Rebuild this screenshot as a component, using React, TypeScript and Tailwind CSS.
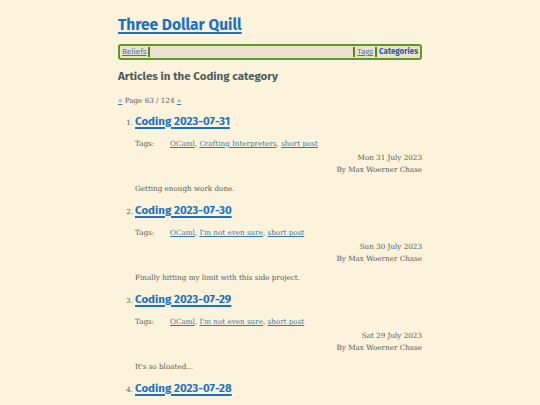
import React from "react";

const posts = [
  {
    n: 1,
    title: "Coding 2023-07-31",
    tags: ["OCaml", "Crafting Interpreters", "short post"],
    date: "Mon 31 July 2023",
    summary: "Getting enough work done.",
  },
  {
    n: 2,
    title: "Coding 2023-07-30",
    tags: ["OCaml", "I'm not even sure", "short post"],
    date: "Sun 30 July 2023",
    summary: "Finally hitting my limit with this side project.",
  },
  {
    n: 3,
    title: "Coding 2023-07-29",
    tags: ["OCaml", "I'm not even sure", "short post"],
    date: "Sat 29 July 2023",
    summary: "It's so bloated...",
  },
  {
    n: 4,
    title: "Coding 2023-07-28",
    tags: ["OCaml", "I'm not even sure", "short post"],
    date: "Fri 28 July 2023",
    summary: "More of the same.",
  },
];

const sans = "font-['Fira_Sans','Lato','Noto_Sans',sans-serif]";
const serif = "font-['DejaVu_Serif','Liberation_Serif',serif]";

export default function App() {
  return (
    <div className={`h-[405px] overflow-hidden bg-[#fbf3dc] ${serif} text-[#5a5a5a] text-[7.2px]`}>
      <div className="mx-auto w-[304px] pt-[14px]">
        {/* -- Site title -- */}
        <h1 className={`${sans} text-[15.5px] font-bold leading-[22px]`}>
          <a href="#" className="text-[#1b72c0] underline decoration-[1.5px] underline-offset-2">
            Three Dollar Quill
          </a>
        </h1>

        {/* -- Nav -- */}
        <nav
          className={`${sans} mt-[8px] flex h-[16px] items-center rounded-[3px] border-2 border-[#5d9a22] bg-[#ebe3cf] px-[2px] text-[8px]`}
        >
          <a href="#" className="text-[#3b78b0] underline">Beliefs</a>
          <span className="ml-[1px] h-[10px] w-[2px] bg-[#4f8a1a]" />
          <span className="flex-1" />
          <span className="mr-[2px] h-[10px] w-[2px] bg-[#4f8a1a]" />
          <a href="#" className="text-[#3b78b0] underline">Tags</a>
          <span className="mx-[2px] h-[10px] w-[2px] bg-[#4f8a1a]" />
          <a href="#" className="font-bold text-[#1d5fa0]">Categories</a>
        </nav>

        {/* -- Heading -- */}
        <h2 className={`${sans} mt-[8px] text-[11.5px] font-bold leading-[16px] text-[#4e5d5c]`}>
          Articles in the Coding category
        </h2>

        <p className="mt-[12px] leading-[10px]">
          <a href="#" className="text-[#3b78b0] underline">«</a> Page 63 / 124{" "}
          <a href="#" className="text-[#3b78b0] underline">»</a>
        </p>

        {/* -- Posts -- */}
        <ol className="mt-[6px]">
          {posts.map((p) => (
            <li key={p.n} className="mb-[7px]">
              <div className="flex items-baseline">
                <span className="w-[17px] pr-[2px] text-right text-[7px]">{p.n}.</span>
                <a
                  href="#"
                  className={`${sans} text-[11.5px] font-bold leading-[18px] text-[#1b72c0] underline decoration-[1.5px] underline-offset-2`}
                >
                  {p.title}
                </a>
              </div>
              <div className="ml-[17px] mt-[9px] flex leading-[10px]">
                <span className="w-[35px]">Tags:</span>
                <span>
                  {p.tags.map((t, i) => (
                    <React.Fragment key={t}>
                      <a href="#" className="text-[#3b78b0] underline">{t}</a>
                      {i < p.tags.length - 1 ? ", " : ""}
                    </React.Fragment>
                  ))}
                </span>
              </div>
              <div className="mt-[3px] text-right leading-[12px]">
                <div>{p.date}</div>
                <div>By Max Woerner Chase</div>
              </div>
              <p className="ml-[17px] mt-[8px] leading-[10px]">{p.summary}</p>
            </li>
          ))}
        </ol>
      </div>
    </div>
  );
}
